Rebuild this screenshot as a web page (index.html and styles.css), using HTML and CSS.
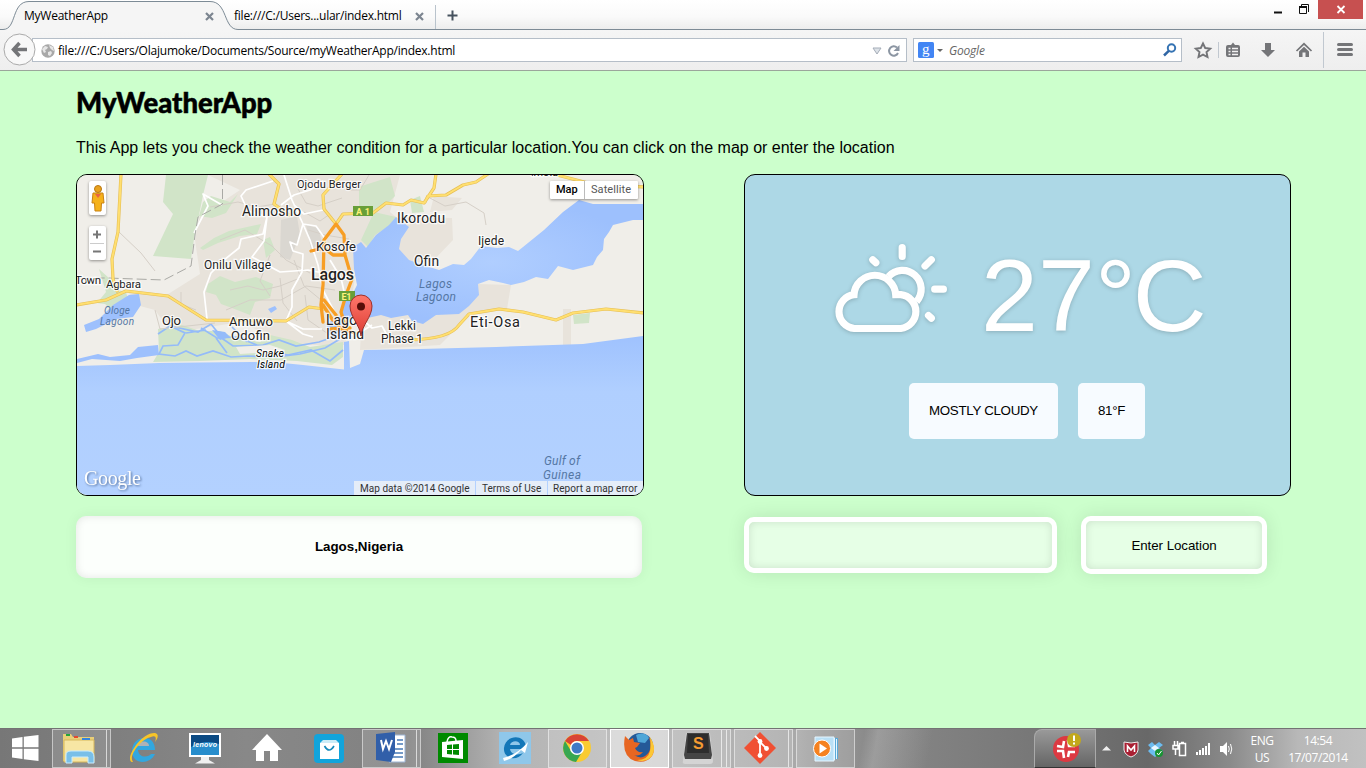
FILE: index.html
```html
<!DOCTYPE html>
<html lang="en">
<head>
<meta charset="utf-8">
<title>MyWeatherApp</title>
<link rel="stylesheet" href="styles.css">
</head>
<body>
<header class="tabs">
  <svg class="tab-shape" width="1366" height="30" viewBox="0 0 1366 30">
    <path d="M0 29.5H3C17 29.5 11 1.5 29 1.5H210C228 1.5 223 29.5 238 29.5V30H0Z" fill="#f5f5f5"/>
    <path d="M0 29.5H3C17 29.5 11 1.5 29 1.5H210C228 1.5 223 29.5 238 29.5H1366" fill="none" stroke="#7d8b96"/>
    <path d="M435.500 5V29" stroke="#b9c3cc"/>
  </svg>
  <div class="tab tab-one"><span class="tab-name n1">MyWeatherApp</span><svg width="9" height="9" viewBox="0 0 9 9"><path d="M1 1L8 8M8 1L1 8" stroke="#7c8590" stroke-width="2.200"/></svg></div>
  <div class="tab tab-two"><span class="tab-name n2">file:///C:/Users...ular/index.html</span><svg width="9" height="9" viewBox="0 0 9 9"><path d="M1 1L8 8M8 1L1 8" stroke="#7c8590" stroke-width="2.200"/></svg></div>
  <svg class="plus" width="11" height="11" viewBox="0 0 11 11"><path d="M5.500 0.500V10.500M0.500 5.500H10.500" stroke="#46525e" stroke-width="2"/></svg>
  <div class="win-buttons">
    <svg width="100" height="20" viewBox="0 0 100 20"><path d="M8 12.500H16" stroke="#111" stroke-width="2"/><path d="M33.500 6.500H40.500V13.500H33.500ZM35.500 6V4.500H42.500V12" fill="none" stroke="#111"/><path d="M33 7H41" stroke="#111" stroke-width="2"/><path d="M52 0H97V19H52Z" fill="#c75050"/><path d="M71.500 6L78.500 13M78.500 6L71.500 13" stroke="#fff" stroke-width="1.800"/></svg>
  </div>
</header>
<nav class="toolbar">
  <div class="address">
    <svg class="globe" width="14" height="14" viewBox="0 0 14 14"><circle cx="7" cy="7" r="6.700" fill="#a8a8a8"/><path d="M1 5L4 2 7 3 6 5 4 6 5 8 3 9ZM8 1L12 3 13 7 11 6 9 4ZM7 8L10 7 11 9 9 12 7 11Z" fill="#e6e6e6"/></svg>
    <span class="url">file:///C:/Users/Olajumoke/Documents/Source/myWeatherApp/index.html</span>
    <svg width="32" height="16" viewBox="0 0 32 16"><path d="M4 5H12L8 11Z" fill="#dde2e8" stroke="#a5adb8"/><path d="M28 4.500A4.700 4.700 0 1 0 29 10" fill="none" stroke="#8c96a3" stroke-width="2"/><path d="M30.500 2V8H24.500Z" fill="#8c96a3"/></svg>
  </div>
  <svg class="back" width="34" height="34" viewBox="0 0 34 34"><circle cx="16.500" cy="16.500" r="15.500" fill="#f8f8f8" stroke="#aaa"/><path d="M16.500 10L10.500 16.500L16.500 23M11 16.500H24" fill="none" stroke="#747578" stroke-width="3.500"/></svg>
  <div class="search">
    <svg width="28" height="16" viewBox="0 0 28 16"><rect width="16" height="16" rx="1.500" fill="#4285f4"/><text x="4" y="11.500" class="g-letter">g</text><path d="M19 7H25L22 10Z" fill="#666"/></svg>
    <span class="engine">Google</span>
    <svg width="14" height="14" viewBox="0 0 14 14"><circle cx="8.500" cy="5" r="3.700" fill="none" stroke="#3573b3" stroke-width="2"/><path d="M5.800 7.800L1 12.500" stroke="#2f65a4" stroke-width="2.500"/></svg>
  </div>
  <svg class="tools" width="170" height="40" viewBox="1190 30 170 40">
    <path d="M1203 43.500L1205.200 48 1210.200 48.600 1206.500 52 1207.500 57 1203 54.600 1198.500 57 1199.500 52 1195.800 48.600 1200.800 48Z" fill="none" stroke="#747578" stroke-width="1.900"/>
    <path d="M1218.500 42V58M1323.500 32V68" stroke="#c1c8d0"/>
    <path d="M1228 45H1231L1233 42.500 1235 45H1238Q1240 45 1240 47V55Q1240 57 1238 57H1228Q1226 57 1226 55V47Q1226 45 1228 45Z" fill="#747578"/><path d="M1228.500 48.500H1230.500M1232 48.500H1238M1228.500 51.500H1230.500M1232 51.500H1238M1228.500 54.500H1230.500M1232 54.500H1238" stroke="#f2f2f2" stroke-width="1.500"/>
    <path d="M1265 43H1271V50H1275L1268 57 1261 50H1265Z" fill="#747578"/>
    <path d="M1296.500 51L1304 43.800 1311.500 51" fill="none" stroke="#747578" stroke-width="1.700"/><path d="M1299 51.500L1304 46.800 1309 51.500V57H1305.500V52.500H1302.500V57H1299Z" fill="#747578"/>
    <path d="M1338.500 44.500H1351.500M1338.500 49.500H1351.500M1338.500 54.500H1351.500" stroke="#747578" stroke-width="3" stroke-linecap="round"/>
  </svg>
</nav>

<main class="page">
  <h1>MyWeatherApp</h1>
  <p class="intro">This App lets you check the weather condition for a particular location.You can click on the map or enter the location</p>
  <div class="panels">
    <section class="map">
      <svg width="566" height="320" viewBox="77 175 566 320">
        <defs>
          <linearGradient id="sea" x1="0" y1="0" x2="0" y2="1"><stop offset="0" stop-color="#9fc2fe"/><stop offset=".35" stop-color="#b0cfff"/><stop offset="1" stop-color="#b3d1ff"/></linearGradient>
          <radialGradient id="lagoon"><stop offset="0" stop-color="#b0ceff"/><stop offset="1" stop-color="#9dc0fd"/></radialGradient>
          <linearGradient id="pin" x1="0" y1="0" x2="0" y2="1"><stop offset="0" stop-color="#ff776b"/><stop offset="1" stop-color="#dc3d34"/></linearGradient>
        </defs>
        <path d="M77 175H643V495H77Z" fill="#f0eee9"/>
        <path d="M208 175H400L390 212 408 227 399 249 410 260 356 270 345 345 290 345 240 322 190 330 168 328 155 310 140 306 128 292 165 296 200 274 195 240 200 214 222 202 240 190Z" fill="#e8e3db"/>
        <path d="M400 217L452 218 453 240 432 262 410 262 395 246ZM434 196L462 198 452 210 430 212ZM478 284L511 285 507 309 470 316 460 325 440 345 360 350 362 315 440 314ZM563 309H571V345H563Z" fill="#e8e3db"/>
        <path d="M281 220L297 216 300 235 290 260 280 257ZM306 225L318 228 322 242 311 250Z" fill="#dad7d1"/>
        <g fill="#d1e4c8">
          <path d="M166 175H208L203 195 199 215 194 239 191 259 153 256 173 214 163 202Z"/>
          <path d="M211 196L230 202 238 194 226 213 212 218 199 216 203 202ZM200 248L214 238 229 231 261 224 257 234 240 236 218 243 203 250Z"/>
          <path d="M208 284L220 276 235 282 256 277 273 284 270 298 255 302 250 315 232 308 221 304 216 295 206 292ZM263 240L270 237 275 250 266 258Z"/>
          <path d="M371 183L390 177 395 196 386 205 372 216 359 210 359 187ZM374 212L396 217 389 226 375 235 368 247 361 240Z"/>
          <path d="M410 200L420 196 424 212 412 213ZM573 315L590 313 589 323 574 324ZM117 290L126 292 130 307 114 312 105 304 97 303 106 292 99 269 110 279Z"/>
          <path d="M158 329L182 325 200 331 220 331 235 338 260 342 270 335 292 340 310 347 343 342 343 357 332 365 297 361 250 359 200 361 153 362 159 352Z"/>
        </g>
        <path d="M77 366L110 365 159 363 200 362.500 253 362 283 363 303 365 344 369.500V342L349 341 350 368 360 364 364 350 420 349 496 347 583 344 643 336V495H77Z" fill="url(#sea)"/>
        <path d="M643 204L609 204 593 204 579 200 563 212 544 230 523 247 518 251 509 247 497 248 481 246 471 259 464 265 453 264 439 270 423 265 409 260 399 249 401 239 409 227 396 217 389 225 376 235 366 248 361 242 353 247 354 269 357 285 352 295 345 300 340 318 350 319 363 319 381 315 391 318 408 315 412 321 423 324 436 315 459 314 469 306 479 295 478 284 489 280 503 283 511 285 524 282 536 277 548 279 558 266 573 270 593 265 597 257 603 250 604 239 609 232 613 225 633 220 643 220Z" fill="url(#lagoon)"/>
        <path d="M129 295L139 294 141 305 133 317 116 319 96 329 86 332 84 325 99 319 113 305ZM77 359L98 354 110 357 130 355 138 347 158 345 159 355 137 358 120 361 92 359 77 363ZM268 309L275 306 277 309 271 313Z" fill="#9dc0fd"/>
        <g fill="none" stroke="#94bbf9" stroke-width="1.700">
          <path d="M158 334L170 326 185 333 178 345 163 346 159 354 175 356 186 351 197 356 213 351 231 357 248 356 276 357 300 354 325 348 340 339"/>
          <path d="M170 326L198 332 211 324 223 339 233 346 263 345 279 340 296 346 319 342 342 334M201 328L217 338 237 337 257 345M232 327L247 342M186 333L206 330M216 338L227 353M263 350L288 355 311 350 330 361 343 350"/>
        </g>
        <path d="M236 347L270 345 285 350 280 357 256 353 240 354Z" fill="#f0eee9"/>
        <path d="M326 324L341 316 348 323 345 332 331 337ZM212 330L220 340 230 337 225 332Z" fill="#94bbf9"/>
        <g fill="none" stroke="#d5cfc7" stroke-width="1">
          <path d="M119 232L141 253 155 271M155 310L160 329 215 323M181 292V304L196 310M210 207L238 202 257 207 275 204M220 240L245 230 272 246 286 260 310 273M230 290L248 286 263 290 280 286 300 278M226 310L250 300 281 300 306 286 335 290M298 189L306 203 318 206 342 198M304 212L320 221 330 214M294 260L304 286 321 300M305 295L308 320 334 338M280 278L283 303 297 321M308 230L325 235 349 239M369 175L360 190 346 190 332 180M428 197L445 206 466 202 484 213 486 225M270 255L260 281 270 296"/>
        </g>
        <g fill="none" stroke="#fff" stroke-width="1.700" stroke-linejoin="round">
          <path d="M273 181L246 190 241 196 248 211 267 217 263 234 241 239 239 248 224 260 211 273 204 292 207 319M267 217L264 241 252 257 280 272 308 270 323 273M284 175L292 200 303 224 310 240 318 265 323 290 336 315M303 224L297 245 290 242 293 251 303 254 302 272 292 290 292 307 286 321 303 329 322 329M286 321L303 334 313 337M303 224L316 226 326 240M194 233L208 206 203 194 222 205M281 205L294 195 310 190 323 181M323 210L304 214 294 205M363 320L372 328 382 326 388 337M350 335L364 330 372 325M330 260L341 278 346 300"/>
        </g>
        <path d="M222.500 175V204L198 217 195 235 191 266 164 280 107 278 77 278" fill="none" stroke="#a9a9a5" stroke-dasharray="10 4"/>
        <g fill="none" stroke-linejoin="round" stroke-linecap="round">
          <path class="road-edge" d="M121 174L118 232 112 259 113 279 117 291M76 305L106 300 126 291 168 296 206 320 286 321 309 307 324 309M269 174L279 184 274 204 289 215M342 174L323 195 324 209 336 224 343 214 373 213 386 203 403 205 411 200 424 203 434 188 436 174M425 202L428 196 446 195 463 185 476 182 488 174M553 174L596 185 644 187M409 340Q450 339 459 325L469 314 499 309 523 312 556 320 573 313 606 309 644 313"/>
          <path class="road-fill" d="M121 174L118 232 112 259 113 279 117 291M76 305L106 300 126 291 168 296 206 320 286 321 309 307 324 309M269 174L279 184 274 204 289 215M342 174L323 195 324 209 336 224 343 214 373 213 386 203 403 205 411 200 424 203 434 188 436 174M425 202L428 196 446 195 463 185 476 182 488 174M553 174L596 185 644 187M409 340Q450 339 459 325L469 314 499 309 523 312 556 320 573 313 606 309 644 313"/>
        </g>
        <g fill="none" stroke="#f79e24" stroke-width="3.300" stroke-linejoin="round" stroke-linecap="round"><path d="M336 224L324 240 323 285 321 305 323 322M323 305L332 319 343 330 355 333M336 224L344 235 345 255 352 279 346 295 341 312 345 325M311 251L324 248 333 255 345 255M324 300L336 315M331 329L350 328"/></g>
        <path d="M353 206H373V216H353ZM339 291H355V301H339Z" fill="#689f38"/>
        <g class="shield"><text x="356" y="214.500" textLength="14">A 1</text><text x="341.500" y="299.500" textLength="10">E1</text></g>
        <g class="town">
          <text x="297" y="188" textLength="64" font-size="11">Ojodu Berger</text><text x="242" y="216" textLength="59">Alimosho</text><text x="397" y="223" textLength="48">Ikorodu</text><text x="478" y="244.500" textLength="26" font-size="12">Ijede</text><text x="316" y="251" textLength="40" font-size="13">Kosofe</text><text x="414" y="266" textLength="25">Ofin</text><text x="204" y="269" textLength="67" font-size="12">Onilu Village</text><text x="311" y="279.500" textLength="43" font-size="16" font-weight="500">Lagos</text><text x="75" y="284" textLength="26" font-size="11.500">Town</text><text x="106" y="288" textLength="35" font-size="11.500">Agbara</text><text x="162" y="325" textLength="19" font-size="13">Ojo</text><text x="229" y="326" textLength="44" font-size="13">Amuwo</text><text x="231" y="340" textLength="39" font-size="13">Odofin</text><text x="326" y="324.500" textLength="31">Lago</text><text x="326" y="339" textLength="38">Island</text><text x="388" y="330" textLength="28" font-size="12">Lekki</text><text x="381" y="343" textLength="42" font-size="12">Phase 1</text><text x="470" y="327" textLength="50" font-size="14.500">Eti-Osa</text><text x="531" y="175.500" textLength="27" font-size="11">Imota</text>
        </g>
        <g class="town islet"><text x="256" y="357" textLength="28">Snake</text><text x="257" y="367.500" textLength="28">Island</text></g>
        <g class="water"><text x="104" y="313.500" textLength="26" font-size="10">Ologe</text><text x="100" y="324.500" textLength="34" font-size="10">Lagoon</text><text x="419" y="288" textLength="33">Lagos</text><text x="416" y="301" textLength="40">Lagoon</text><text x="544" y="465" textLength="36">Gulf of</text><text x="543" y="479" textLength="38">Guinea</text></g>
        <path d="M361 336C360 325 350 317 350 306A11 11 0 1 1 372 306C372 317 362 325 361 336Z" fill="url(#pin)" stroke="#9d3029"/><circle cx="361" cy="306.500" r="4" fill="#560d08"/>
        <text x="84" y="485" textLength="57" class="google-mark">Google</text>
      </svg>
      <div class="pegman"><svg width="16" height="30" viewBox="0 0 16 30"><path d="M3 10H13L14 20H11.500L11 28H5L4.500 20H2Z" fill="#f5b21b" stroke="#c98213"/><path d="M5 11H11L8 15Z" fill="#e96443"/><circle cx="8" cy="6" r="3.500" fill="#e9a21e" stroke="#b97813"/></svg></div>
      <div class="zoom"><svg width="16" height="34" viewBox="0 0 16 34"><path d="M8 4.500V12.500M4 8.500H12M4 25.500H12" stroke="#777" stroke-width="2"/><path d="M1 17.500H15" stroke="#ccc"/></svg></div>
      <div class="map-type"><span class="on">Map</span><span class="off">Satellite</span></div>
      <div class="credits"><span class="c1">Map data ©2014 Google</span><span class="c2">Terms of Use</span><span class="c3">Report a map error</span></div>
    </section>
    <section class="weather">
      <div class="now">
        <svg width="120" height="95" viewBox="832 240 120 95"><g fill="none" stroke="#fff" stroke-width="7.200"><path d="M855.300 327.500A17 17 0 0 1 855 293.700A20.900 20.900 0 0 1 896.700 293.700H901.700A17 17 0 0 1 901.700 327.500Z"/><path d="M889.500 275.700A18.700 18.700 0 0 1 917.500 300.500"/><path stroke-linecap="round" d="M903.200 246.700V255.500M873.800 258.800L876.800 261.700M932.300 258.800L926 265M935.700 288.200H944.400M929.500 314.500L932.300 317.200"/></g></svg>
        <span class="degrees">27°<span class="unit">C</span></span>
      </div>
      <div class="chips"><span class="chip sky">MOSTLY CLOUDY</span><span class="chip temp">81°F</span></div>
    </section>
  </div>
  <div class="controls">
    <div class="place">Lagos,Nigeria</div>
    <input class="field" type="text" aria-label="Location">
    <button class="go" type="button">Enter Location</button>
  </div>
</main>

<footer class="taskbar">
  <div class="start"><svg width="50" height="40" viewBox="0 0 50 40"><path d="M12 10.500L22.500 9V19.300H12ZM23.800 8.800L38.500 7V19.300H23.800ZM12 20.700H22.500V31L12 29.500ZM23.800 20.700H38.500V33L23.800 31.200Z" fill="#fff"/></svg></div>
  <div class="slot framed tail1"><svg width="36" height="40" viewBox="63 729 36 40"><path d="M63 735H71L73 738H94V762H63Z" fill="#e9cf78"/><path d="M64 741H94V763H64Z" fill="#f7e6a4" stroke="#d7b75b"/><path d="M66 736H70" stroke="#25a43b" stroke-width="2"/><path d="M74 738H78" stroke="#e34a2f" stroke-width="2"/><path d="M82 740H90" stroke="#3585dc" stroke-width="2"/><path d="M66 764V756Q66 752 71 752H88Q94 752 94 758V764H88V758H72V764Z" fill="#79bfe8" stroke="#c9ecff"/></svg></div>
  <div class="slot"><svg width="36" height="36" viewBox="0 0 36 36"><path d="M7 21C7 5 30 2 30 20H13C14 29 24 27 26 24H30C25 35 7 35 7 21Z" fill="#32a7df"/><path d="M13 16C14 10 24 10 24 16Z" fill="#aeb2b5"/><path d="M8 32C-2 32 15 2 30 3C35 4 32 10 30 12C32 7 30 5 26 7C16 9 3 26 8 32Z" fill="#f7c429"/></svg></div>
  <div class="slot"><svg width="34" height="36" viewBox="0 0 34 36"><path d="M1 3H33V27H1Z" fill="#fff"/><path d="M3 5H31V25H3Z" fill="#0b4a83"/><path d="M3 17Q17 9 31 14V25H3Z" fill="#278dcc"/><text x="5" y="17" textLength="24" class="lenovo">lenovo</text><path d="M13 27H21V30L27 33.500H7L13 30Z" fill="#f0f0f0"/></svg></div>
  <div class="slot"><svg width="32" height="40" viewBox="0 0 32 40"><path d="M16 6L31 22H27V33H19V23H13V33H5V22H1Z" fill="#fff"/></svg></div>
  <div class="slot"><svg width="30" height="40" viewBox="0 0 30 40"><rect y="6" width="30" height="29" rx="4" fill="#12a4db"/><path d="M6 15H25V31H6Z" fill="#fff"/><path d="M6 15L9 12H22L25 15" fill="#ccecf7"/><path d="M10.500 18Q15 26 20 18" fill="none" stroke="#1689ba" stroke-width="1.600"/></svg></div>
  <div class="slot framed tail1"><svg width="34" height="40" viewBox="0 0 34 40"><path d="M15 7H31V34H15Z" fill="#fff" stroke="#9db5d5"/><path d="M23 12H29M23 16H29M17 21H29M17 25H29M17 29H29" stroke="#4779b7" stroke-width="1.500"/><path d="M2 6L21 4V24L17 34 2 32Z" fill="#315fa9"/><path d="M7 12L9 21 12 13 15 21 18 12" fill="none" stroke="#fff" stroke-width="2"/></svg></div>
  <div class="slot"><svg width="30" height="40" viewBox="0 0 30 40"><path d="M0 5H30V35H0Z" fill="#008a00"/><path d="M4 14L25 12V31L4 29Z" fill="#fff"/><path d="M9 14Q10 8 14 9Q18 9 18 13" fill="none" stroke="#fff" stroke-width="1.500"/><path d="M9 17L14 16.500V21H9ZM15 16.500L21 16V21H15ZM9 22H14V26.500L9 26ZM15 22H21V27L15 26.500Z" fill="#008a00"/></svg></div>
  <div class="slot"><svg width="32" height="40" viewBox="0 0 32 40"><path d="M0 4H32V36H0Z" fill="#8fc7ea"/><path d="M5 20C6 7 25 5 27 18V21H11C12 28 21 27 24 25C18 34 4 31 5 20ZM11 17H21C21 12 12 12 11 17Z" fill="#1377b8"/><path d="M4 30Q18 27 29 14L26 25 22 22Q14 31 5 33Z" fill="#fff"/></svg></div>
  <div class="slot framed"><svg width="30" height="40" viewBox="0 0 30 40"><circle cx="15" cy="20" r="14" fill="#f9cb31"/><path d="M3 13A14 14 0 0 1 27 13H15A7 7 0 0 0 9 17Z" fill="#d94435"/><path d="M3 13A14 14 0 0 0 14 34L20 24 9 23Z" fill="#37a751"/><circle cx="15" cy="20" r="7" fill="#fff"/><circle cx="15" cy="20" r="5.500" fill="#3e7ac6"/></svg></div>
  <div class="slot framed active"><svg width="32" height="40" viewBox="0 0 32 40"><circle cx="17" cy="18" r="13" fill="#245998"/><path d="M13 7Q22 3 26 10L22 15 15 14Z" fill="#4fa6d8"/><path d="M2 8L6 12 10 10 11 14 17 15 14 19 12 20Q14 25 20 24Q16 29 11 27Q20 33 26 24Q29 19 26 9Q34 20 29 28Q23 36 12 33Q-2 28 2 8Z" fill="#e76622"/><path d="M27 9Q34 20 29 28Q23 35 14 32Q25 32 27 23Q28 17 27 9Z" fill="#fcc735"/></svg></div>
  <div class="slot framed tail2"><svg class="shift-left" width="34" height="40" viewBox="0 0 34 40"><path d="M5 5H29L32 33Q32 36 29 36H4Q1 36 2 33Z" fill="#d4d4d4"/><path d="M6 5H28L31 27 30 31H4L3 27Z" fill="#454545"/><path d="M7 6H27L28 25H6Z" fill="#2d2d2d"/><text x="12" y="21" class="sublime-s">S</text></svg></div>
  <div class="slot framed tail1"><svg class="shift-left" width="34" height="40" viewBox="0 0 34 40"><path d="M17 4L33 20 17 36 1 20Z" fill="#f05033"/><path d="M12 8L17 13V28M17 14L23 20" fill="none" stroke="#fff" stroke-width="1.800"/><g fill="#fff"><circle cx="17" cy="13.500" r="2.400"/><circle cx="17" cy="27.500" r="2.400"/><circle cx="23.500" cy="20.500" r="2.400"/></g></svg></div>
  <div class="slot framed"><svg width="30" height="40" viewBox="0 0 30 40"><path d="M8 9L28 10V31L9 33Z" fill="#5baad8"/><path d="M5 9H24V33H5Z" fill="#b9e0f6" stroke="#e7f6ff"/><path d="M24.500 10V32M26.500 11V31" stroke="#e7f6ff"/><circle cx="12" cy="20.500" r="8.500" fill="#f58220" stroke="#fff"/><path d="M9.500 15.500L17 20.500 9.500 25.500Z" fill="#fff"/></svg></div>
  <div class="alert"><svg width="32" height="40" viewBox="0 0 32 40"><circle cx="14" cy="20" r="13" fill="#dc3942"/><path d="M5 17L11 18 12 12M16 11L17 17 23 17M5 22L11 22 12 29M16 28L17 23 23 23" fill="none" stroke="#fff" stroke-width="2.600"/><circle cx="22" cy="11" r="7" fill="#c2a81c"/><path d="M22 6.500V12M22 13.500V15.500" stroke="#fff" stroke-width="2"/></svg></div>
  <svg class="tray" width="160" height="40" viewBox="1088 728 160 40"><path d="M1102 750.500L1106.500 746 1111 750.500Z" fill="#eee"/><path d="M1124 742L1131 743 1138 742V750Q1137 755 1131 757Q1125 755 1124 750Z" fill="#a91f32" stroke="#eee"/><path d="M1127.500 752V746L1131 750 1134.500 746V752" fill="none" stroke="#fff" stroke-width="1.600"/><path d="M1148 745L1152 742 1155 745 1159 742 1163 745 1159 748 1163 751 1159 754 1155 757 1151 754 1148 751 1151 748Z" fill="#6cbcf0"/><path d="M1151 748L1155 745 1159 748 1155 751Z" fill="#eaf7ff"/><circle cx="1159" cy="753" r="4" fill="#189434"/><path d="M1157 753L1158.500 755 1161.500 751" fill="none" stroke="#fff"/><path d="M1179.500 743.500H1185.500V755.500H1179.500ZM1181 742.500H1184M1174.500 741V745M1177.500 741V745M1173 745.500H1178V749H1173ZM1175.500 749V755" fill="none" stroke="#fff" stroke-width="1.500"/><path d="M1197 755V752M1200 755V750M1203 755V748M1206 755V746M1209 755V743" stroke="#fff" stroke-width="2"/><path d="M1220 746H1223L1227 742V756L1223 752H1220Z" fill="#fff"/><path d="M1228.500 746Q1230 749 1228.500 752M1230.500 744Q1233 749 1230.500 754" fill="none" stroke="#fff"/></svg>
  <div class="lang"><span>ENG</span><span>US</span></div>
  <div class="clock"><span>14:54</span><span>17/07/2014</span></div>
</footer>
</body>
</html>
```
FILE: styles.css
```css
* { box-sizing: border-box; }
body { margin: 0; width: 1366px; height: 768px; overflow: hidden; display: flex; flex-direction: column; background: #ccffcc; font-family: "Liberation Sans", sans-serif; color: #000; }
svg { display: block; flex: none; }

/* Browser window */
.tabs { position: relative; height: 30px; flex: none; display: flex; align-items: center; background: linear-gradient(#fff, #fafafa 55%, #ececec); font: 12px/16px "Open Sans", sans-serif; }
.tab-shape { position: absolute; left: 0; top: 0; }
.tab { position: relative; display: flex; align-items: center; justify-content: space-between; white-space: nowrap; padding-top: 2px; }
.tab-one { width: 190px; margin-left: 24px; }
.tab-two { width: 190px; margin-left: 20px; }
.n1, .n2 { letter-spacing: -.24px; }
.plus { position: relative; margin-left: 23px; }
.win-buttons { position: relative; margin-left: auto; align-self: flex-start; }
.toolbar { position: relative; height: 41px; flex: none; display: flex; align-items: center; background: linear-gradient(#f5f5f5, #eee); border-bottom: 1px solid #9ba69b; font: 12px/16px "Open Sans", sans-serif; }
.address { width: 875px; height: 24px; margin-left: 32px; padding: 1px 5px 0 8px; display: flex; align-items: center; border: 1px solid #b5bec8; background: #fff; }
.url { margin-left: 3px; flex: 1; white-space: nowrap; letter-spacing: -.23px; }
.back { position: absolute; left: 3px; top: 3px; }
.search { width: 269px; height: 24px; margin-left: 6px; padding: 0 4px; display: flex; align-items: center; border: 1px solid #b5bec8; background: #fff; }
.engine { flex: 1; margin-left: 3px; padding-top: 1px; font-style: italic; color: #666; letter-spacing: -.2px; }
.g-letter { font: 15px "Liberation Serif", serif; fill: #fff; }
.tools { margin-left: 8px; }

/* Application */
.page { flex: 1; padding: 15px 75px 0 76px; }
h1 { margin: 0; height: 34px; font: 900 27.500px/34px Lato, sans-serif; -webkit-text-stroke: .5px #000; }
.intro { margin: 19px 0 0; font-size: 16px; line-height: 18px; height: 35px; white-space: nowrap; }
.panels { display: flex; justify-content: space-between; height: 322px; }
.map, .weather { border: 1px solid #000; border-radius: 11px; overflow: hidden; height: 322px; }
.map { position: relative; width: 568px; }
.road-edge { stroke: #e6bf55; stroke-width: 3.200; }
.road-fill { stroke: #ffdf70; stroke-width: 2; }
.town { font-family: Roboto, sans-serif; font-size: 13.800px; fill: #222; stroke: #fff; stroke-opacity: .8; stroke-width: 2.500px; paint-order: stroke; }
.islet { font-size: 10.500px; font-style: italic; fill: #000; }
.water { font-family: Roboto, sans-serif; font-size: 12px; font-style: italic; fill: #5577a4; }
.shield { font: bold 9px Roboto, sans-serif; fill: #fff27a; }
.google-mark { font: 20px "Liberation Serif", serif; fill: #fff; filter: drop-shadow(1px 1px 1px #526f9c); }
.pegman, .zoom { position: absolute; left: 12px; width: 17px; background: #fff; border-radius: 2px; box-shadow: 0 1px 3px rgba(0, 0, 0, .4); }
.pegman { top: 6px; height: 34px; padding: 2px 0 0 .5px; }
.zoom { top: 51px; height: 34px; }
.map-type { position: absolute; right: 5px; top: 6px; width: 88px; height: 18px; display: flex; background: #fff; border-radius: 1px; box-shadow: 0 1px 3px rgba(0, 0, 0, .4); font: 11px/18px Roboto, sans-serif; }
.on { width: 35px; padding-left: 6px; border-right: 1px solid #bbb; font-weight: 500; }
.off { padding-left: 6px; color: #565656; letter-spacing: .08px; }
.credits { position: absolute; right: 0; bottom: 0; height: 14px; display: flex; gap: 1px; font: 10px/15px Roboto, sans-serif; color: #333; white-space: nowrap; }
.credits span { background: rgba(245, 245, 245, .75); padding-left: 6px; }
.c1 { width: 121px; letter-spacing: .03px; }
.c2 { width: 71px; }
.credits .c3 { width: 95px; padding-left: 5px; letter-spacing: .05px; }
.weather { width: 547px; background: #add8e6; padding-top: 66px; }
.now { display: flex; padding-left: 86px; height: 142px; filter: drop-shadow(0 1px 2px rgba(0, 0, 0, .2)); }
.degrees { margin-left: 30px; color: #fff; font-size: 102.400px; line-height: 109px; white-space: nowrap; }
.unit { margin-left: -3px; }
.chips { display: flex; gap: 20px; padding-left: 164px; }
.chip { height: 56px; padding: 20px; border-radius: 5px; background: #f7fbff; font-size: 13.330px; line-height: 15px; white-space: nowrap; letter-spacing: -.3px; }
.sky { width: 149px; }
.temp { width: 67px; }
.controls { display: flex; margin-top: 20px; align-items: flex-start; }
.place { width: 566px; height: 62px; border-radius: 10px; background: rgba(255, 255, 255, .93); text-align: center; font: bold 13.330px/62px "Liberation Sans", sans-serif; box-shadow: 0 0 14px rgba(0, 0, 0, .06), inset 0 0 8px rgba(0, 0, 0, .1); }
.field, .go { padding: 0; border: 5px solid #fff; border-radius: 10px; background: rgba(255, 255, 255, .5); background-clip: padding-box; box-shadow: 0 0 18px rgba(0, 0, 0, .1), inset 0 0 8px rgba(0, 0, 0, .12); }
.field { width: 313px; height: 56px; margin: 1px 0 0 102px; }
.go { width: 186px; height: 58px; margin-left: 24px; font: 13.330px "Liberation Sans", sans-serif; color: #000; letter-spacing: -.05px; }

/* Desktop taskbar */
.taskbar { height: 40px; flex: none; display: flex; border-top: 1px solid #737373; background: linear-gradient(100deg, transparent 63%, rgba(220, 220, 220, .25) 64%, transparent 68%), linear-gradient(90deg, #777 0, #888 18%, #818181 30%, #b4b4b4 37%, #bebebe 46%, #aaa 58%, #878787 64%, #777 76%, #686868 84%, #8a8a8a 90%, #b8b8b8 95%, #c1c1c1); }
.taskbar svg { margin-top: -1px; }
.start { width: 50px; }
.slot { position: relative; width: 62px; height: 39px; display: flex; align-items: center; justify-content: center; }
.framed::before { content: ""; position: absolute; inset: 0 1px 0 2px; border: 1px solid rgba(255, 255, 255, .5); background: rgba(255, 255, 255, .13); }
.framed svg { position: relative; }
.taskbar .shift-left { margin-right: 7px; }
.tail1::after, .tail2::after { content: ""; position: absolute; top: 1px; bottom: 1px; right: 5px; border-right: 1px solid rgba(255, 255, 255, .65); }
.tail2::after { width: 4px; border-left: 1px solid rgba(255, 255, 255, .65); }
.active::before { background: rgba(255, 255, 255, .45); border-color: #fff; }
.lenovo { font: italic bold 7px "Liberation Sans", sans-serif; fill: #fff; }
.sublime-s { font: bold 16px "Liberation Sans", sans-serif; fill: #f59b32; }
.alert { width: 62px; margin-left: 178px; padding-left: 17px; border: 1px solid #aaa; border-bottom-color: #333; border-radius: 8px 0 0; background: linear-gradient(#999, #656565); }
.tray { margin-left: -8px; }
.lang, .clock { display: flex; flex-direction: column; align-items: center; padding-top: 3px; color: #fff; font: 12px/17px "Open Sans", sans-serif; letter-spacing: -.4px; }
.lang { width: 28px; }
.clock { width: 64px; margin-left: 10px; }
```
